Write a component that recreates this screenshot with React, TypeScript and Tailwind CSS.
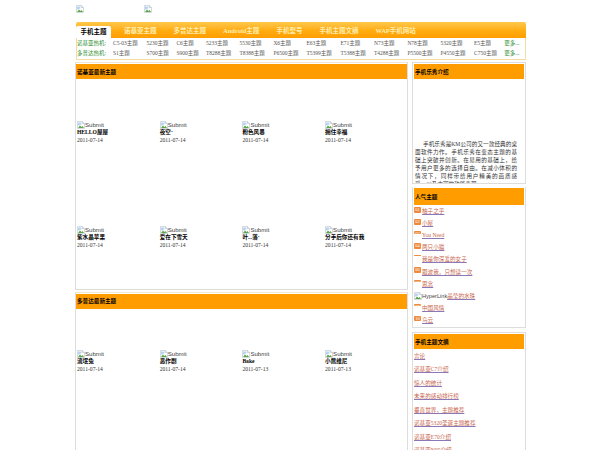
const navItems = ['诺基亚主题', '多普达主题', 'Android主题', '手机型号', '手机主题文摘', 'WAP手机网站']

const row1 = ['C5-03主题', '5230主题', 'C6主题', '5233主题', '5530主题', 'X6主题', 'E63主题', 'E71主题', 'N73主题', 'N78主题', '5320主题', 'E5主题']
const row2 = ['S1主题', 'S700主题', 'S900主题', 'T8288主题', 'T8388主题', 'P6500主题', 'T5399主题', 'T5388主题', 'T4288主题', 'P5500主题', 'P4550主题', 'C750主题']

const nokia = [
	{ title: 'HELLO屋屋', date: '2011-07-14' },
	{ title: '夜空·', date: '2011-07-14' },
	{ title: '粉色风暴', date: '2011-07-14' },
	{ title: '拥住幸福', date: '2011-07-14' },
	{ title: '紫水晶苹果', date: '2011-07-14' },
	{ title: '爱在下雪天', date: '2011-07-14' },
	{ title: '叶...落·', date: '2011-07-14' },
	{ title: '分手后你还有我', date: '2011-07-14' },
]

const dopod = [
	{ title: '流氓兔', date: '2011-07-14' },
	{ title: '恶作剧', date: '2011-07-14' },
	{ title: 'Bake', date: '2011-07-13' },
	{ title: '小熊维尼', date: '2011-07-13' },
]

const intro = [
	'手机乐秀是KM公司的又一款经典的桌',
	'面软件力作。手机乐秀在变态主题的基',
	'础上突破并创新。在易用的基础上，给',
	'予用户更多的选择自由。在减小体积的',
	'情况下，同样带给用户精美的画质感',
]

const popular = [
	{ badge: '01', h: 'h-[6px]', text: '柚子之乎' },
	{ badge: '02', h: 'h-[6px]', text: '小屋' },
	{ badge: '03', h: 'h-[3px]', text: 'You Need' },
	{ badge: '04', h: 'h-[6px]', text: '两只小猫' },
	{ badge: '05', h: 'h-[1px]', text: '我是你深爱的女子' },
	{ badge: '06', h: 'h-[6px]', text: '跟波我，只想读一次' },
	{ badge: '07', h: 'h-[2px]', text: '思念' },
	{ badge: '', h: '', text: '晶莹的水珠' },
	{ badge: '09', h: 'h-[2px]', text: '中国风情' },
	{ badge: '10', h: 'h-[5px]', text: '鸟云' },
]

const articles = ['言论', '诺基亚C7介绍', '惊人的统计', '未来的感动排行榜', '垂直世界，主题推荐', '诺基亚5320圣诞主题推荐', '诺基亚E70介绍', '诺基亚N95介绍']

function BrokenImage() {
	return (
		<svg width="8" height="8" viewBox="0 0 16 16" className="shrink-0">
			<path d="M1 1h10l4 4v10H1z" fill="#fff" stroke="#a9b4bf" />
			<path d="M11 1v4h4" fill="#dfe6ec" stroke="#a9b4bf" />
			<path d="M2 14l4-5 3 3 2-2 3 4z" fill="#5aa84a" />
			<path d="M2 9V3h7v3l-4 3z" fill="#b9d3f2" />
		</svg>
	)
}

function Theme({ title, date }: { title: string; date: string }) {
	return (
		<div className="pl-px">
			<div className="flex items-center h-[8px] font-['Liberation_Sans',sans-serif] text-[6.1px] text-[#444]">
				<BrokenImage />
				<span>Submit</span>
			</div>
			<div className="h-[8px] leading-[8px] mt-[-1px] font-bold text-black">{title}</div>
			<div className="h-[8px] leading-[8px] text-[#333] whitespace-nowrap">{date}</div>
		</div>
	)
}

function Header({ children, className }: { children: string; className: string }) {
	return <div className={`bg-[#ff9d00] font-bold text-black flex items-center pl-[1px] ${className}`}>{children}</div>
}

function ThemeLink({ children }: { children: string }) {
	return <span className="text-[#c8654c] underline decoration-[#8a78b8] whitespace-nowrap">{children}</span>
}

export default function App() {
	return (
		<div className="w-[600px] h-[450px] overflow-hidden bg-white text-[5.6px] leading-[8px] font-['Liberation_Serif','Noto_Sans_CJK_SC',serif]">
			<div className="w-[450px] ml-[76px]">
				{/* Logos */}
				<div className="flex h-[22px] pt-[5px] gap-[60px]">
					<BrokenImage />
					<BrokenImage />
				</div>

				{/* Nav */}
				<div className="h-[16px] flex items-end rounded-t-[2px] bg-gradient-to-b from-[#ffc94a] via-[#ffae12] to-[#ff9d00] text-[6.5px] font-bold text-[#ffedb0]">
					<div className="w-[35px] h-[12.5px] bg-white rounded-t-[2px] text-black flex items-center justify-center">手机主题</div>
					<div className="flex items-center h-[16px] gap-[17px] ml-[13px] pt-[2px]">
						{navItems.map((item) => (
							<div key={item} className="whitespace-nowrap">{item}</div>
						))}
					</div>
				</div>

				{/* Hot models */}
				<div className="h-[22px] border border-t-0 border-[#f3dca0] text-[5.5px] text-[#555] grid grid-cols-[36px_33.4px_30px_29.5px_33.5px_34px_33px_34px_33.6px_33.4px_33px_33.6px_30.4px_auto] auto-rows-[10px] items-center">
					<span className="text-[#2f8f2f] whitespace-nowrap">诺基亚热机:</span>
					{row1.map((item) => (
						<span key={item} className="whitespace-nowrap">{item}</span>
					))}
					<span className="text-[#2f8f2f] whitespace-nowrap">更多...</span>
					<span className="text-[#2f8f2f] whitespace-nowrap">多普达热机:</span>
					{row2.map((item) => (
						<span key={item} className="whitespace-nowrap">{item}</span>
					))}
					<span className="text-[#2f8f2f] whitespace-nowrap">更多...</span>
				</div>

				<div className="flex mt-[2px] gap-[4px] -ml-[1px]">
					{/* Left column */}
					<div className="w-[333px] shrink-0">
						<div className="h-[228px] border border-[#ddd] border-t-[#efe6cf] pt-px overflow-hidden">
							<Header className="h-[15px]">诺基亚最新主题</Header>
							<div className="grid grid-cols-[repeat(4,82.7px)] auto-rows-[105px] pt-[41.5px]">
								{nokia.map((t) => (
									<Theme key={t.title} {...t} />
								))}
							</div>
						</div>
						<div className="mt-[2px] h-[200px] border border-[#ddd] border-t-[#efe6cf] pt-px">
							<Header className="h-[14.5px]">多普达最新主题</Header>
							<div className="grid grid-cols-[repeat(4,82.7px)] pt-[41.5px]">
								{dopod.map((t) => (
									<Theme key={t.title} {...t} />
								))}
							</div>
						</div>
					</div>

					{/* Right column */}
					<div className="w-[114px] shrink-0 flex flex-col">
						<div className="h-[122px] border border-[#ddd] px-px pt-px overflow-hidden">
							<Header className="h-[15px]">手机乐秀介绍</Header>
							<div className="pt-[61px] pl-[1px] pr-[7px] text-[#333]">
								{intro.map((line, i) => (
									<div key={line} className={`whitespace-nowrap [text-align-last:justify] ${i === 0 ? 'pl-[8px]' : ''}`}>
										{line}
									</div>
								))}
								<div className="whitespace-nowrap">受，以及丰富的功能表现</div>
							</div>
						</div>
						<div className="mt-[3px] h-[141px] border border-[#ddd] border-t-0 px-px pt-px overflow-hidden">
							<Header className="h-[17px]">人气主题</Header>
							<div>
								{popular.map((p) => (
									<div key={p.text} className="h-[12.1px] flex items-center overflow-hidden">
										{p.badge ? (
											<span className="w-[8px] shrink-0 self-start mt-[2px]">
												<span className={`block w-[7px] overflow-hidden bg-[#ee8a3c] text-white text-[4.5px] leading-[6px] text-center rounded-[1px] ${p.h}`}>
													{p.badge}
												</span>
											</span>
										) : (
											<span className="flex items-center text-[#444] text-[5.6px] font-['Liberation_Sans',sans-serif]">
												<BrokenImage />
												<span>HyperLink</span>
											</span>
										)}
										<ThemeLink>{p.text}</ThemeLink>
									</div>
								))}
							</div>
						</div>
						<div className="mt-[4px] h-[130px] border border-[#ddd] px-px pt-px overflow-hidden">
							<Header className="h-[15px]">手机主题文摘</Header>
							<div>
								{articles.map((a) => (
									<div key={a} className="h-[13.5px] flex items-center">
										<ThemeLink>{a}</ThemeLink>
									</div>
								))}
							</div>
						</div>
					</div>
				</div>
			</div>
		</div>
	)
}
